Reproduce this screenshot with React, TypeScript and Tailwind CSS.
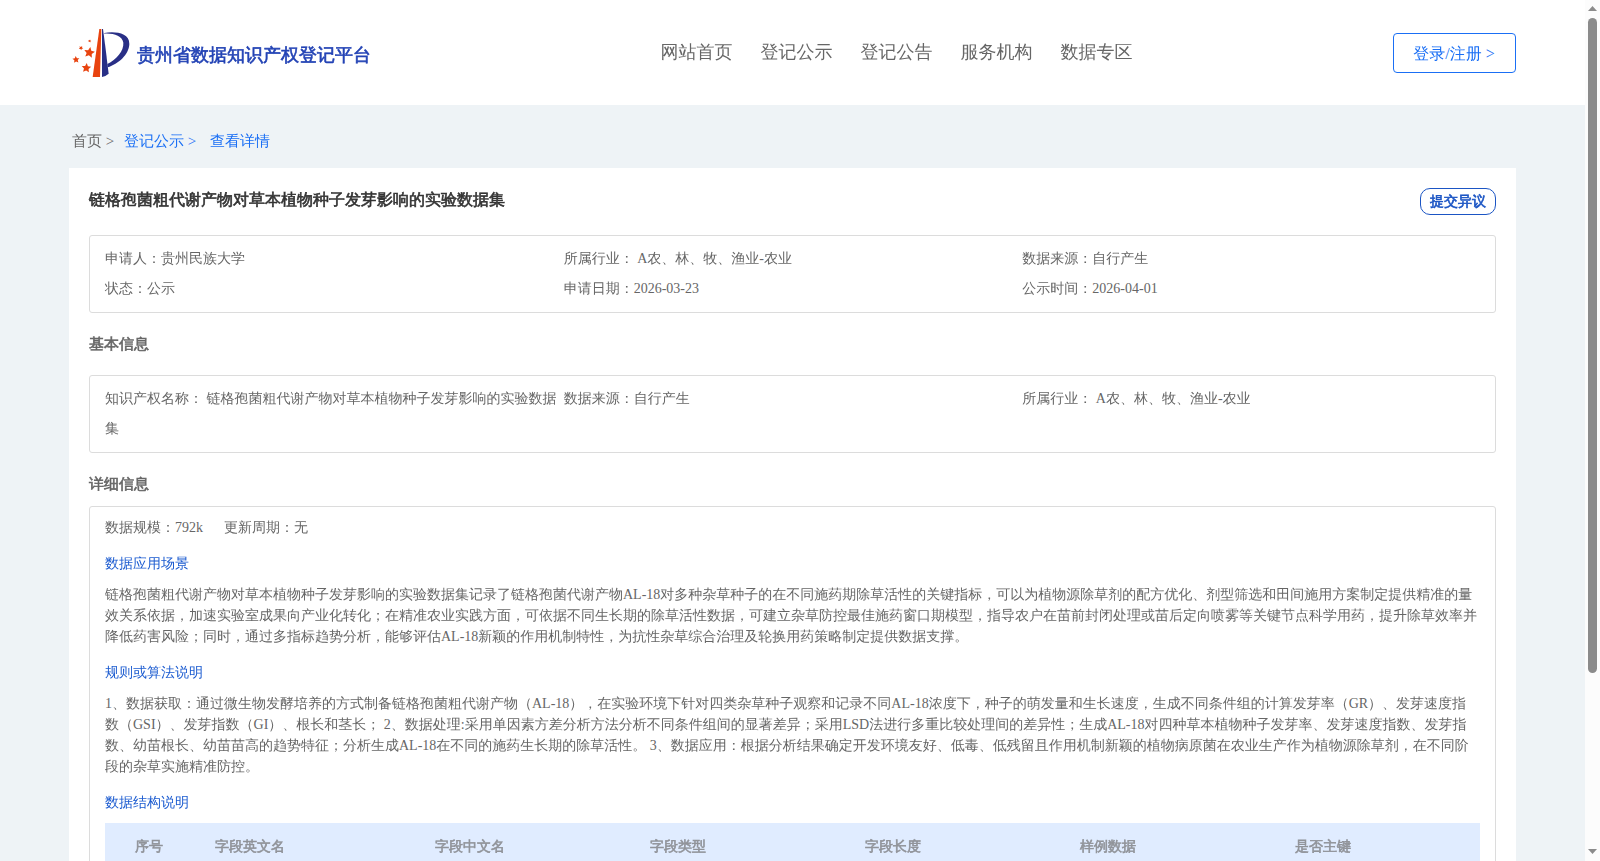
import React from "react";

const NAV = ["网站首页", "登记公示", "登记公告", "服务机构", "数据专区"];

const SUMMARY = [
  "申请人：贵州民族大学",
  "所属行业： A农、林、牧、渔业-农业",
  "数据来源：自行产生",
  "状态：公示",
  "申请日期：2026-03-23",
  "公示时间：2026-04-01",
];

const BASIC = [
  "知识产权名称： 链格孢菌粗代谢产物对草本植物种子发芽影响的实验数据集",
  "数据来源：自行产生",
  "所属行业： A农、林、牧、渔业-农业",
];

const SCENE = [
  "链格孢菌粗代谢产物对草本植物种子发芽影响的实验数据集记录了链格孢菌代谢产物AL-18对多种杂草种子的在不同施药期除草活性的关键指标，可以为植物源除草剂的配方优化、剂型筛选和田间施用方案制定提供精准的量",
  "效关系依据，加速实验室成果向产业化转化；在精准农业实践方面，可依据不同生长期的除草活性数据，可建立杂草防控最佳施药窗口期模型，指导农户在苗前封闭处理或苗后定向喷雾等关键节点科学用药，提升除草效率并",
  "降低药害风险；同时，通过多指标趋势分析，能够评估AL-18新颖的作用机制特性，为抗性杂草综合治理及轮换用药策略制定提供数据支撑。",
];

const RULES = [
  "1、数据获取：通过微生物发酵培养的方式制备链格孢菌粗代谢产物（AL-18），在实验环境下针对四类杂草种子观察和记录不同AL-18浓度下，种子的萌发量和生长速度，生成不同条件组的计算发芽率（GR）、发芽速度指",
  "数（GSI）、发芽指数（GI）、根长和茎长； 2、数据处理:采用单因素方差分析方法分析不同条件组间的显著差异；采用LSD法进行多重比较处理间的差异性；生成AL-18对四种草本植物种子发芽率、发芽速度指数、发芽指",
  "数、幼苗根长、幼苗苗高的趋势特征；分析生成AL-18在不同的施药生长期的除草活性。 3、数据应用：根据分析结果确定开发环境友好、低毒、低残留且作用机制新颖的植物病原菌在农业生产作为植物源除草剂，在不同阶",
  "段的杂草实施精准防控。",
];

const COLUMNS = ["字段英文名", "字段中文名", "字段类型", "字段长度", "样例数据", "是否主键"];

// The CJK face has no bold cut, so headings are thickened with a stroke.
const HEAVY = "font-bold [-webkit-text-stroke:0.6px_currentColor]";

export default function App() {
  return (
    <div className="flex h-[861px] w-[1600px] overflow-hidden bg-[#eef3f6] text-[14px] text-[#666] [font-family:'Liberation_Serif','WenQuanYi_Zen_Hei','Noto_Sans_CJK_SC',serif]">
      <div className="h-full w-[1585px] overflow-hidden">
        <Header />
        <main className="mx-auto w-[1447px]">
          <nav className="flex h-[63px] items-center pl-[3px] pt-[9px] text-[15px] leading-[22px] whitespace-pre">
            <span className="w-[52px]">首页 &gt;</span>
            <span className="w-[86px] text-[#1a6ff5]">登记公示 &gt;</span>
            <span className="text-[#1a6ff5]">查看详情</span>
          </nav>

          <section className="h-[900px] bg-white px-5 pt-5">
            <div className="flex h-[27px] items-start justify-between">
              <h1 className={`text-[16px] leading-6 text-[#333] ${HEAVY}`}>
                链格孢菌粗代谢产物对草本植物种子发芽影响的实验数据集
              </h1>
              <button
                className={`h-[27px] w-[76px] rounded-[10px] border border-[#1b55c4] leading-[25px] text-[#1b55c4] ${HEAVY}`}
              >
                提交异议
              </button>
            </div>

            <InfoGrid items={SUMMARY} className="mt-5" />
            <SectionTitle className="mt-5">基本信息</SectionTitle>
            <InfoGrid items={BASIC} className="mt-5" />
            <SectionTitle className="mt-5">详细信息</SectionTitle>

            <div className="mt-[11px] h-[500px] rounded-[3px] border border-[#dcdcdc] px-[15px] pt-[10px]">
              <div className="flex h-[21px] gap-[21px] leading-[21px]">
                <span>数据规模：792k</span>
                <span>更新周期：无</span>
              </div>
              <Block title="数据应用场景" lines={SCENE} />
              <Block title="规则或算法说明" lines={RULES} />
              <BlockTitle>数据结构说明</BlockTitle>
              <div className={`mt-[10px] flex h-[48px] bg-[#e0ecff] pl-[30px] leading-[47px] text-[#909399] ${HEAVY}`}>
                <div className="w-[80px] shrink-0">序号</div>
                {COLUMNS.map((name, i) => (
                  <div key={name} className={i === 0 ? "w-[220px] shrink-0" : "w-[215px] shrink-0"}>
                    {name}
                  </div>
                ))}
              </div>
            </div>
          </section>
        </main>
      </div>
      <Scrollbar />
    </div>
  );
}

function Header() {
  return (
    <header className="h-[105px] bg-white">
      <div className="mx-auto flex h-full w-[1447px] items-start">
        <Logo />
        <div className={`mt-[42px] w-[523.5px] text-[18px] leading-[26px] text-[#2343b5] ${HEAVY}`}>
          贵州省数据知识产权登记平台
        </div>
        <nav className="mt-[39px] flex gap-7 text-[18px] leading-[26px]">
          {NAV.map((label) => (
            <a key={label}>{label}</a>
          ))}
        </nav>
        <button className="mt-[33px] ml-auto h-[40px] w-[123px] rounded-[4px] border border-[#1a6ff5] pt-px pr-px text-[16px] leading-[38px] text-[#1a6ff5]">
          登录/注册 &gt;
        </button>
      </div>
    </header>
  );
}

function InfoGrid({ items, className }: { items: string[]; className: string }) {
  return (
    <div
      className={`${className} grid h-[78px] grid-cols-3 content-start rounded-[3px] border border-[#dcdcdc] pt-2 pr-[14px] pl-[15px] leading-[30px]`}
    >
      {items.map((item) => (
        <div key={item}>{item}</div>
      ))}
    </div>
  );
}

function SectionTitle({ children, className }: { children: React.ReactNode; className: string }) {
  return <h2 className={`${className} h-[22px] text-[15px] leading-[22px] ${HEAVY}`}>{children}</h2>;
}

function BlockTitle({ children }: { children: React.ReactNode }) {
  return <h3 className="mt-[15px] h-[21px] leading-[21px] text-[#1b5bd0]">{children}</h3>;
}

function Block({ title, lines }: { title: string; lines: string[] }) {
  return (
    <>
      <BlockTitle>{title}</BlockTitle>
      <div className="mt-[10px] leading-[21px] whitespace-nowrap">
        {lines.map((line) => (
          <p key={line}>{line}</p>
        ))}
      </div>
    </>
  );
}

// Five-pointed star centred on cx, cy
function Star({ cx, cy, r, turn = 0 }: { cx: number; cy: number; r: number; turn?: number }) {
  const points = Array.from({ length: 10 }, (_, i) => {
    const radius = i % 2 === 0 ? r : r * 0.48;
    const a = ((i * 36 - 90 + turn) * Math.PI) / 180;
    return `${(cx + radius * Math.cos(a)).toFixed(1)},${(cy + radius * Math.sin(a)).toFixed(1)}`;
  }).join(" ");
  return <polygon points={points} fill="#e8430f" />;
}

function Logo() {
  return (
    <svg viewBox="12 0 204 195" className="mt-5 h-[65px] w-[68px] shrink-0">
      <path d="M103 27h6L105 171H83Z" fill="#e8430f" />
      <path d="M111 27h3L121 80L131 161Q122 169 111 171Z" fill="#292f86" />
      <path
        d="M118 39C145 34 194 36 193 72C192 104 160 132 128 142L127 132C154 118 177 93 175 68C172 48 145 39 118 41Z"
        fill="#292f86"
      />
      <Star cx={73} cy={98} r={17} turn={10} />
      <Star cx={33} cy={119} r={11} turn={-5} />
      <Star cx={64} cy={144} r={15} turn={5} />
      <Star cx={48} cy={84} r={7} turn={30} />
      <Star cx={74} cy={63} r={5} turn={15} />
    </svg>
  );
}

function Scrollbar() {
  return (
    <div className="flex h-full w-[15px] flex-col items-center bg-[#fcfcfc]">
      <svg viewBox="0 0 9 5" className="mt-[6px] h-[5px] w-[9px]">
        <path d="M4.5 0L9 5H0Z" fill="#8b8b8b" />
      </svg>
      <div className="mt-[7px] h-[655px] w-[9px] rounded-full bg-[#8b8b8b]" />
      <svg viewBox="0 0 9 5" className="mt-auto mb-[7px] h-[5px] w-[9px]">
        <path d="M0 0H9L4.5 5Z" fill="#8b8b8b" />
      </svg>
    </div>
  );
}
